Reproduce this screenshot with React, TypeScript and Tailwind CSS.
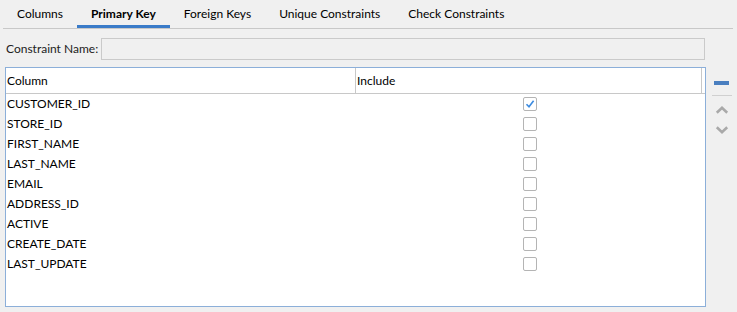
import { useState } from "react";

const tabs = ["Columns", "Primary Key", "Foreign Keys", "Unique Constraints", "Check Constraints"];

const rows = [
  { name: "CUSTOMER_ID", on: true },
  { name: "STORE_ID", on: false },
  { name: "FIRST_NAME", on: false },
  { name: "LAST_NAME", on: false },
  { name: "EMAIL", on: false },
  { name: "ADDRESS_ID", on: false },
  { name: "ACTIVE", on: false },
  { name: "CREATE_DATE", on: false },
  { name: "LAST_UPDATE", on: false },
];

function Check({ on }: { on: boolean }) {
  return (
    <div className="w-[14px] h-[14px] rounded-[2px] border border-[#b4b4b4] bg-white flex items-center justify-center">
      {on && (
        <svg width="10" height="10" viewBox="0 0 10 10">
          <path d="M1.5 5.2 L4 7.8 L8.6 1.8" fill="none" stroke="#3c8be0" strokeWidth="1.6" />
        </svg>
      )}
    </div>
  );
}

export default function App() {
  const [active] = useState(1);

  return (
    <div
      className="w-[737px] h-[312px] bg-[#f0f0f0] text-[12px] text-black overflow-hidden"
      style={{ fontFamily: 'Lato, "Noto Sans", sans-serif' }}
    >
      {/* Tabs */}
      <div className="ml-[3px] mr-[4px] h-[29px] flex items-end border-b border-[#c8c8c8]">
        {tabs.map((t, i) => (
          <div
            key={t}
            className={`h-[28px] px-[14px] flex items-center leading-none whitespace-nowrap ${
              i === active ? "font-bold border-b-[3px] border-[#3a7bc8] pt-[3px]" : ""
            }`}
          >
            {t}
          </div>
        ))}
      </div>

      {/* Constraint name */}
      <div className="flex items-center mt-[9px] pl-[6px] pr-[32px] h-[22px]">
        <span className="w-[95px] text-[#222] whitespace-nowrap">Constraint Name:</span>
        <div className="flex-1 h-[22px] border border-[#cacaca] bg-[#f0f0f0]" />
      </div>

      <div className="flex mt-[7px] pl-[5px]">
        {/* Table */}
        <div className="w-[701px] h-[240px] border border-[#8cafd9] bg-white">
          <div className="flex h-[26px] border-b border-[#c8c8c8]">
            <div className="w-[350px] border-r border-[#c8c8c8] pl-[1px] flex items-center">Column</div>
            <div className="w-[346px] border-r border-[#c8c8c8] pl-[1px] flex items-center">Include</div>
          </div>
          {rows.map((r) => (
            <div key={r.name} className="flex h-[20px] items-center">
              <div className="w-[350px] pl-[1px]">{r.name}</div>
              <div className="w-[348px] flex justify-center">
                <Check on={r.on} />
              </div>
            </div>
          ))}
        </div>

        {/* Side buttons */}
        <div className="w-[31px] flex flex-col items-center pt-[14px]">
          <div className="w-[15px] h-[4px] bg-[#4a7fc0]" />
          <div className="w-[20px] h-px bg-[#d0d0d0] mt-[10px]" />
          <div className="h-[8px] mt-[10px] flex justify-center">
            <svg width="14" height="8" viewBox="0 0 14 8">
              <path d="M1.8 6.8 L7 1.8 L12.2 6.8" fill="none" stroke="#a9a9a9" strokeWidth="2.6" />
            </svg>
          </div>
          <div className="h-[8px] mt-[12px] flex justify-center">
            <svg width="14" height="8" viewBox="0 0 14 8">
              <path d="M1.8 1.2 L7 6.2 L12.2 1.2" fill="none" stroke="#a9a9a9" strokeWidth="2.6" />
            </svg>
          </div>
        </div>
      </div>
    </div>
  );
}
